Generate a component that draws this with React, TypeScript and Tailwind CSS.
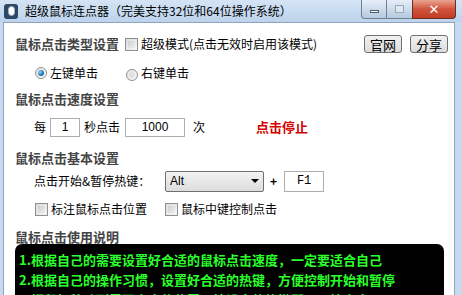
import React from "react";

const cjk = { fontFamily: '"Noto Sans CJK SC", "Noto Sans", sans-serif' };

function CheckBox() {
  return (
    <span className="inline-block w-[13px] h-[13px] border border-[#8f8f8f] bg-gradient-to-br from-[#dcdcdc] to-[#f7f7f7] p-[2px] shrink-0">
      <span className="block w-full h-full bg-gradient-to-br from-[#cfcfcf] to-[#eeeeee]" />
    </span>
  );
}

function Radio({ checked }: { checked?: boolean }) {
  return (
    <span className="inline-flex items-center justify-center w-[12px] h-[12px] rounded-full border border-[#8e8f8f] bg-gradient-to-br from-[#e4e4e4] to-[#fafafa] shrink-0">
      {checked ? (
        <span className="block w-[6px] h-[6px] rounded-full bg-[radial-gradient(circle_at_35%_35%,#8fd6ff,#1a6fb0_60%,#0d4f88)]" />
      ) : (
        <span className="block w-[6px] h-[6px] rounded-full bg-[#e2e2e2]" />
      )}
    </span>
  );
}

function Heading({ children }: { children: React.ReactNode }) {
  return <div className="h-[18px] flex items-center pl-[11px] text-[13px] font-bold text-[#444]">{children}</div>;
}

export default function App() {
  return (
    <div className="w-[462px] h-[295px] overflow-hidden bg-[#c7daf0] relative select-none" style={cjk}>
      {/* Title bar */}
      <div className="h-[22px] flex items-center bg-gradient-to-b from-[#d5e4f5] to-[#bcd3ec] relative">
        <div className="ml-[4px] w-[14px] h-[15px] rounded-[3px] bg-[#2d4867] flex items-center justify-center">
          <span className="block w-[7px] h-[10px] rounded-[4px] bg-white border border-[#9fb3c8]" />
        </div>
        <span className="ml-[7px] text-[12px] text-black leading-none">超级鼠标连点器（完美支持32位和64位操作系统）</span>
        <div className="absolute top-0 right-[6px] flex h-[19px]">
          <div className="w-[26px] h-full border border-[#6f7f94] border-t-0 rounded-bl-[4px] bg-gradient-to-b from-[#e6eef8] to-[#b7c9df] flex items-center justify-center">
            <span className="block w-[9px] h-[3px] bg-white border border-[#4d5d72] mt-[4px]" />
          </div>
          <div className="w-[25px] h-full border-y border-[#6f7f94] border-t-0 bg-gradient-to-b from-[#e6eef8] to-[#b7c9df] flex items-center justify-center">
            <span className="block w-[9px] h-[8px] border border-[#9aa9bc] bg-[#dfe7f1]" />
          </div>
          <div className="w-[44px] h-full border border-[#6b2e22] border-t-0 rounded-br-[4px] bg-gradient-to-b from-[#e8a493] via-[#d0543b] to-[#c23d24] flex items-center justify-center">
            <span className="text-white font-bold text-[13px] leading-none" style={{ fontFamily: '"DejaVu Sans", sans-serif' }}>✕</span>
          </div>
        </div>
      </div>

      {/* Client area */}
      <div className="absolute left-[3px] top-[22px] w-[452px] h-[280px] bg-white border border-[#8ea3bd] text-[12px] text-black">
        {/* Row 1 */}
        <div className="mt-[10px] h-[22px] flex items-center">
          <div className="pl-[11px] text-[13px] font-bold text-[#444]">鼠标点击类型设置</div>
          <div className="ml-[6px] flex items-center">
            <CheckBox />
            <span className="ml-[3px]">超级模式(点击无效时启用该模式)</span>
          </div>
          <div className="ml-auto mr-[6px] flex gap-[8px]">
            <button className="w-[38px] h-[18px] border border-[#707070] rounded-[3px] bg-gradient-to-b from-[#f2f2f2] to-[#dcdcdc] text-[13px] leading-none flex items-center justify-center">官网</button>
            <button className="w-[38px] h-[18px] border border-[#707070] rounded-[3px] bg-gradient-to-b from-[#f2f2f2] to-[#dcdcdc] text-[13px] leading-none flex items-center justify-center">分享</button>
          </div>
        </div>
        {/* Row 2 */}
        <div className="mt-[8px] h-[20px] flex items-center pl-[31px]">
          <Radio checked />
          <span className="ml-[3px]">左键单击</span>
          <span className="ml-[28px]"><Radio /></span>
          <span className="ml-[3px]">右键单击</span>
        </div>
        <div className="mt-[7px]"><Heading>鼠标点击速度设置</Heading></div>
        {/* Row 4 */}
        <div className="mt-[8px] h-[22px] flex items-center pl-[30px]">
          <span>每</span>
          <div className="ml-[4px] w-[30px] h-[19px] border border-[#abadb3] flex items-center justify-center" style={{ fontFamily: '"Liberation Sans", sans-serif' }}>1</div>
          <span className="ml-[4px]">秒点击</span>
          <div className="ml-[5px] w-[60px] h-[19px] border border-[#abadb3] flex items-center justify-center" style={{ fontFamily: '"Liberation Sans", sans-serif' }}>1000</div>
          <span className="ml-[8px]">次</span>
          <span className="ml-[51px] text-[13px] font-bold text-[#d40000]">点击停止</span>
        </div>
        <div className="mt-[11px]"><Heading>鼠标点击基本设置</Heading></div>
        {/* Row 6 */}
        <div className="mt-[3px] h-[22px] flex items-center pl-[30px]">
          <span className="w-[131px]">点击开始&amp;暂停热键：</span>
          <div className="w-[99px] h-[21px] border border-[#707070] rounded-[2px] bg-gradient-to-b from-[#f3f3f3] to-[#dddddd] flex items-center px-[4px]">
            <span style={{ fontFamily: '"Liberation Sans", sans-serif' }}>Alt</span>
            <span className="ml-auto w-0 h-0 border-l-[4px] border-r-[4px] border-t-[4px] border-l-transparent border-r-transparent border-t-black" />
          </div>
          <span className="ml-[6px] font-bold">+</span>
          <div className="ml-[7px] w-[40px] h-[21px] border border-[#abadb3] flex items-center justify-center" style={{ fontFamily: '"Liberation Mono", monospace' }}>F1</div>
        </div>
        {/* Row 7 */}
        <div className="mt-[8px] h-[18px] flex items-center pl-[31px]">
          <CheckBox />
          <span className="ml-[3px] w-[114px]">标注鼠标点击位置</span>
          <CheckBox />
          <span className="ml-[3px]">鼠标中键控制点击</span>
        </div>
        <div className="mt-[10px]"><Heading>鼠标点击使用说明</Heading></div>
        {/* Black box */}
        <div className="ml-[11px] mt-[-2px] w-[429px] h-[60px] bg-black rounded-t-[7px] pl-[4px] pt-[6px] text-[13px] font-bold text-[#2bff2b] leading-[20px]">
          <div>1.根据自己的需要设置好合适的鼠标点击速度，一定要适合自己</div>
          <div>2.根据自己的操作习惯，设置好合适的热键，方便控制开始和暂停</div>
          <div>3.把鼠标移动到需要点击的位置，按设定的热键即可开始点击</div>
        </div>
      </div>
    </div>
  );
}
